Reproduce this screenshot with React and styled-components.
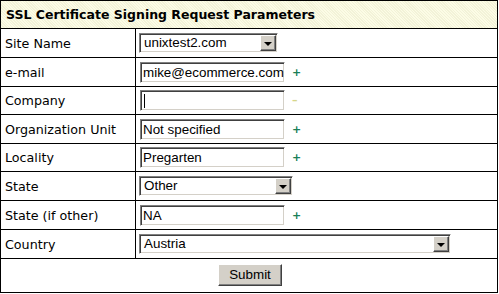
import React from "react";
import styled, { createGlobalStyle } from "styled-components";

const Global = createGlobalStyle`
  html, body { margin: 0; padding: 0; background: #fff; }
  body { font-family: "DejaVu Sans", Verdana, sans-serif; }
`;

const Panel = styled.div`
  width: 496px;
  border: 1px solid #000;
  display: flex;
  flex-direction: column;
`;

const Title = styled.div`
  height: 27px;
  border-bottom: 1px solid #000;
  background-color: #fcfce6;
  background-image: repeating-linear-gradient(45deg, rgba(225,225,190,0.35) 0 1px, transparent 1px 2px);
  display: flex;
  align-items: center;
  padding-left: 5px;
  font-family: "DejaVu Sans", Verdana, sans-serif;
  font-weight: bold;
  font-size: 12.5px;
  color: #000;
`;

const Row = styled.div`
  display: grid;
  grid-template-columns: 135px 1fr;
  height: ${(p) => p.$h}px;
  border-bottom: 1px solid #000;
`;

const Label = styled.div`
  border-right: 1px solid #000;
  display: flex;
  align-items: center;
  padding-left: 4px;
  font-size: 12.7px;
  color: #000;
  white-space: nowrap;
`;

const Field = styled.div`
  display: flex;
  align-items: center;
  padding-left: 3px;
`;

const inset = `
  border-top: 1px solid #808080;
  border-left: 1px solid #808080;
  border-right: 1px solid #fff;
  border-bottom: 1px solid #fff;
  box-shadow: inset 1px 1px 0 #404040, inset -1px -1px 0 #d4d0c8;
`;

const TextBox = styled.div`
  ${inset}
  box-sizing: border-box;
  width: 145px;
  height: 21px;
  margin-left: 1px;
  background: #fff;
  font-family: "Liberation Sans", Arial, sans-serif;
  font-size: 13.4px;
  line-height: 19px;
  padding-left: 2px;
  overflow: hidden;
  white-space: nowrap;
  color: #000;
  position: relative;
`;

const Caret = styled.span`
  position: absolute;
  left: 3px;
  top: 3px;
  width: 1px;
  height: 14px;
  background: #000;
`;

const Select = styled.div`
  ${inset}
  box-sizing: border-box;
  width: ${(p) => p.$w}px;
  height: 20px;
  background: #fff;
  display: flex;
  align-items: stretch;
  font-family: "Liberation Sans", Arial, sans-serif;
  font-size: 13.4px;
  color: #000;
`;

const SelectText = styled.div`
  flex: 1;
  padding-left: 4px;
  line-height: 18px;
  white-space: nowrap;
`;

const Arrow = styled.div`
  width: 16px;
  margin: 1px;
  box-sizing: border-box;
  background: #d4d0c8;
  border-top: 1px solid #fff;
  border-left: 1px solid #fff;
  border-right: 1px solid #404040;
  border-bottom: 1px solid #404040;
  box-shadow: inset -1px -1px 0 #808080;
  display: flex;
  align-items: center;
  justify-content: center;
  &::after {
    content: "";
    border-left: 4px solid transparent;
    border-right: 4px solid transparent;
    border-top: 4px solid #000;
    margin-top: 1px;
  }
`;

const Mark = styled.span`
  margin-left: 7px;
  font-family: "DejaVu Sans", sans-serif;
  font-weight: bold;
  font-size: 11px;
  color: ${(p) => (p.$opt ? "#d6d68a" : "#1a7f58")};
  line-height: 1;
`;

const SubmitRow = styled.div`
  height: 33px;
  display: flex;
  align-items: center;
  justify-content: center;
`;

const Button = styled.button`
  font-family: "Liberation Sans", Arial, sans-serif;
  font-size: 13.4px;
  color: #000;
  background: #d4d0c8;
  height: 22px;
  width: 64px;
  padding: 0;
  margin-left: 2px;
  margin-bottom: 2px;
  border-top: 1px solid #fff;
  border-left: 1px solid #fff;
  border-right: 1px solid #404040;
  border-bottom: 1px solid #404040;
  box-shadow: inset -1px -1px 0 #808080;
`;

const rows = [
  { label: "Site Name", h: 28, type: "select", w: 139, value: "unixtest2.com" },
  { label: "e-mail", h: 28, type: "text", value: "mike@ecommerce.com", mark: "+" },
  { label: "Company", h: 27, type: "text", value: "", caret: true, mark: "–", opt: true },
  { label: "Organization Unit", h: 28, type: "text", value: "Not specified", mark: "+" },
  { label: "Locality", h: 27, type: "text", value: "Pregarten", mark: "+" },
  { label: "State", h: 28, type: "select", w: 154, value: "Other" },
  { label: "State (if other)", h: 28, type: "text", value: "NA", mark: "+" },
  { label: "Country", h: 28, type: "select", w: 312, value: "Austria" },
];

export default function App() {
  return (
    <>
      <Global />
      <Panel>
        <Title>SSL Certificate Signing Request Parameters</Title>
        {rows.map((r) => (
          <Row key={r.label} $h={r.h}>
            <Label>{r.label}</Label>
            <Field>
              {r.type === "select" ? (
                <Select $w={r.w}>
                  <SelectText>{r.value}</SelectText>
                  <Arrow />
                </Select>
              ) : (
                <TextBox>
                  {r.value}
                  {r.caret && <Caret />}
                </TextBox>
              )}
              {r.mark && <Mark $opt={r.opt}>{r.mark}</Mark>}
            </Field>
          </Row>
        ))}
        <SubmitRow>
          <Button>Submit</Button>
        </SubmitRow>
      </Panel>
    </>
  );
}
